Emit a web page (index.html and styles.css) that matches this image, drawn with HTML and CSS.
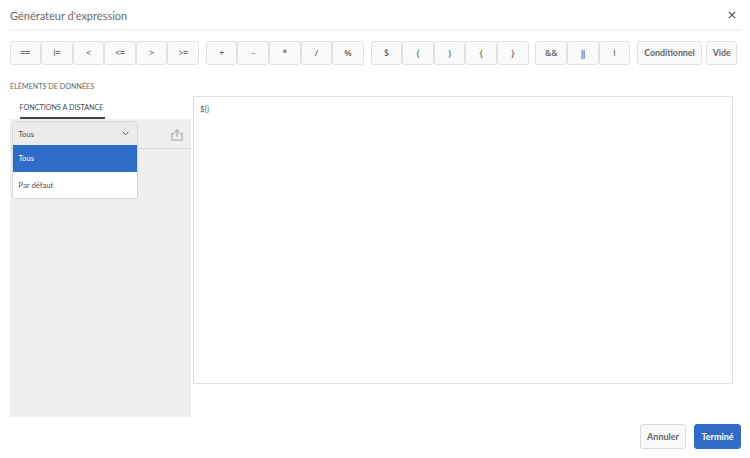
FILE: index.html
```html
<!DOCTYPE html>
<html lang="fr">
<head>
<meta charset="utf-8">
<title>Générateur d'expression</title>
<link rel="stylesheet" href="styles.css">
</head>
<body>
<div class="dialog">
  <header class="head">
    <h1 class="title">Générateur d'expression</h1>
    <svg class="close" width="8" height="8" viewBox="0 0 8 8"><path d="M.8.8l6.4 6.4M7.2.8L.8 7.2" stroke="#555" stroke-width="1.2" fill="none"/></svg>
  </header>
  <div class="toolbar">
    <div class="group"><button class="op">==</button><button class="op">!=</button><button class="op">&lt;</button><button class="op">&lt;=</button><button class="op">&gt;</button><button class="op">&gt;=</button></div>
    <div class="group"><button class="op">+</button><button class="op">-</button><button class="op">*</button><button class="op">/</button><button class="op">%</button></div>
    <div class="group"><button class="op">$</button><button class="op">(</button><button class="op">)</button><button class="op">{</button><button class="op">}</button></div>
    <div class="group"><button class="op">&amp;&amp;</button><button class="op pipes">||</button><button class="op">!</button></div>
    <button class="op word cond">Conditionnel</button>
    <button class="op word vide">Vide</button>
  </div>
  <div class="label">ÉLÉMENTS DE DONNÉES</div>
  <div class="main">
    <aside class="side">
      <div class="tab"><span class="tab-text">FONCTIONS A DISTANCE</span></div>
      <div class="panel">
        <div class="panel-bar">
          <svg class="share" width="12" height="12" viewBox="0 0 13 13"><path d="M4 5H1v7h11V5H9" fill="none" stroke="#b5b5b5" stroke-width="1.5"/><path d="M6.5 8.5V1.5M4 3.6L6.5 1l2.5 2.6" fill="none" stroke="#b5b5b5" stroke-width="1.5"/></svg>
        </div>
        <div class="dropdown">
          <div class="dd-head"><span>Tous</span><svg width="7" height="5" viewBox="0 0 7 5"><path d="M.6.8L3.5 3.7 6.4.8" fill="none" stroke="#555" stroke-width="1"/></svg></div>
          <div class="dd-item selected">Tous</div>
          <div class="dd-item">Par défaut</div>
        </div>
      </div>
    </aside>
    <div class="editor">${}</div>
  </div>
  <footer class="foot">
    <button class="btn cancel">Annuler</button>
    <button class="btn done">Terminé</button>
  </footer>
</div>
</body>
</html>
```
FILE: styles.css
```css
* { box-sizing: border-box; }
html, body { margin: 0; padding: 0; background: #fff; }
body { width: 750px; height: 458px; overflow: hidden; font-family: Lato, "Open Sans", sans-serif; color: #4b4b4b; }
.dialog { display: flex; flex-direction: column; height: 458px; padding: 0 9px 9px 9px; }
.head { display: flex; justify-content: space-between; align-items: center; height: 31px; border-bottom: 2px solid #f2f2f2; padding: 1px 4px 0 1px; width: 732px; }
.title { margin: 0; font-size: 11px; font-weight: 400; color: #6a6a6a; }
.close { margin-right: 1px; margin-top: -1px; }
.toolbar { display: flex; margin: 10px 0 0 0.5px; height: 24px; }
.group { display: flex; margin-right: 6.8px; }
.op { width: 31.6px; height: 24px; padding: 0 0 1px; background: #fafafa; border: 1px solid #e1e1e1; border-radius: 3px; font: 600 8.5px "Open Sans", sans-serif; color: #666; }
.pipes { font: 700 10px Lato, sans-serif; letter-spacing: -0.5px; }
.word { font: 700 8.8px Lato, sans-serif; }
.cond { width: 65px; margin: 0 4px 0 0; }
.vide { width: 31.5px; }
.label { margin: 16px 0 0 1px; font-size: 7.2px; line-height: 11px; color: #666; }
.main { display: flex; margin: 4px 0 0 0.5px; }
.side { width: 181.5px; display: flex; flex-direction: column; margin-right: 2px; }
.tab { display: flex; height: 23px; padding: 6px 0 0 10px; }
.tab-text { height: 17px; width: 85px; font-size: 7.2px; line-height: 12px; white-space: nowrap; color: #4b4b4b; border-bottom: 2px solid #444; }
.panel { position: relative; height: 298px; background: #efefef; }
.panel-bar { height: 30px; border-bottom: 1px solid #d8d8d8; display: flex; justify-content: flex-end; align-items: center; padding: 2px 8px 0 0; }
.dropdown { position: absolute; left: 2px; top: 2px; width: 126px; background: #fff; border: 1px solid #d8d8d8; border-radius: 3px; font-size: 7.7px; overflow: hidden; }
.dd-head { height: 23px; background: #ececec; display: flex; justify-content: space-between; align-items: center; padding: 0 8px 0 6px; }
.dd-item { height: 26.5px; display: flex; align-items: center; padding: 0 6px; color: #555; }
.selected { background: #2f6cc8; color: #fff; }
.editor { width: 540px; height: 288px; border: 1px solid #e1e1e1; padding: 7px 6px; font-size: 7.8px; line-height: 11px; color: #555; }
.foot { display: flex; justify-content: flex-end; gap: 8px; margin-top: auto; width: 732px; }
.btn { height: 25px; padding: 0; border-radius: 3px; font: 700 9px Lato, sans-serif; }
.cancel { width: 46px; background: #fafafa; border: 1px solid #dcdcdc; color: #666; }
.done { width: 47px; background: #2f6cc8; border: 1px solid #2f6cc8; color: #fff; }
```
